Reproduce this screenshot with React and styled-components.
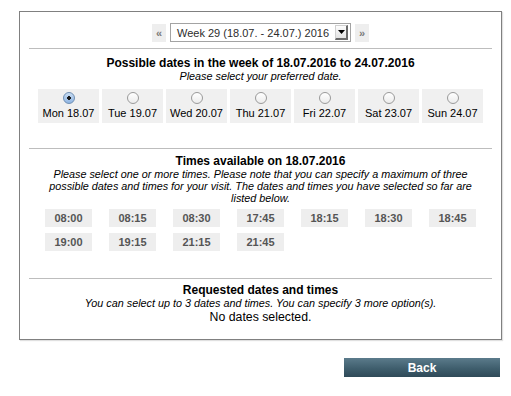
import React from "react";
import styled, { createGlobalStyle } from "styled-components";

const Global = createGlobalStyle`
  html, body { margin: 0; padding: 0; background: #fff; }
  body { font-family: "Liberation Sans", Arial, Helvetica, sans-serif; color: #000; }
`;

const Page = styled.div`
  padding: 11px 0 0 19px;
  width: 483px;
`;

const Panel = styled.div`
  box-sizing: border-box;
  width: 483px;
  border: 1px solid #808080;
  box-shadow: 1px 1px 1px rgba(0, 0, 0, 0.12);
  padding: 0 9px;
`;

const Nav = styled.div`
  display: flex;
  justify-content: center;
  align-items: center;
  gap: 3px;
  padding: 11px 0 6px;
`;

const NavArrow = styled.span`
  display: flex;
  align-items: center;
  justify-content: center;
  width: 14px;
  height: 18px;
  background: #eeeeee;
  color: #7a7a7a;
  font-size: 11px;
  font-weight: bold;
`;

const Select = styled.div`
  box-sizing: border-box;
  display: flex;
  align-items: center;
  justify-content: space-between;
  width: 181px;
  height: 19px;
  border: 1px solid #a3a3a3;
  background: #fff;
  padding: 0 2px 0 6px;
  font-size: 11px;
  white-space: nowrap;
  color: #2c2c2c;
  margin: 0 1px;
`;

const SelectArrow = styled.span`
  box-sizing: border-box;
  display: flex;
  align-items: center;
  justify-content: center;
  width: 13px;
  height: 15px;
  background: linear-gradient(#fdfdfd, #e2e2e2);
  border-right: 2px solid #6a6a6a;
  border-bottom: 2px solid #6a6a6a;
  border-top: 1px solid #d0d0d0;
  border-left: 1px solid #d0d0d0;
`;

const Divider = styled.div`
  border-top: 1px solid #bdbdbd;
`;

const Section = styled.div`
  text-align: center;
  padding-top: ${(p) => p.$top}px;
  padding-bottom: ${(p) => p.$bottom}px;
`;

const Heading = styled.div`
  font-size: 12px;
  font-weight: bold;
  line-height: ${(p) => p.$lh || 14}px;
`;

const Note = styled.div`
  font-size: 10.8px;
  font-style: italic;
  line-height: ${(p) => p.$lh || 13}px;
`;

const Plain = styled.div`
  font-size: 12.3px;
  line-height: 14px;
`;

const Grid = styled.div`
  display: grid;
  grid-template-columns: repeat(7, 61px);
  column-gap: 3px;
  row-gap: 6px;
  justify-content: center;
  justify-items: center;
  margin-top: ${(p) => p.$top}px;
`;

const DayCell = styled.label`
  box-sizing: border-box;
  width: 61px;
  height: 34px;
  background: #f0f0f0;
  display: flex;
  flex-direction: column;
  align-items: center;
  padding-top: 3px;
  font-size: 11px;
  line-height: 14px;
`;

const Radio = styled.span`
  box-sizing: border-box;
  width: 12px;
  height: 12px;
  border-radius: 50%;
  border: 1px solid ${(p) => (p.$checked ? "#6f8fb3" : "#9a9a9a")};
  background: ${(p) =>
    p.$checked
      ? "radial-gradient(circle, #1a1a1a 0 1.6px, transparent 2px), linear-gradient(#c8dcf2, #8fb5e3)"
      : "linear-gradient(#ffffff, #ececec)"};
  margin-bottom: 2px;
`;

const TimeButton = styled.span`
  display: flex;
  align-items: center;
  justify-content: center;
  width: 47px;
  height: 18px;
  background: #eeeeee;
  color: #555;
  font-size: 11px;
  font-weight: bold;
`;

const Footer = styled.div`
  display: flex;
  justify-content: flex-end;
  padding: 18px 2px 0 0;
`;

const BackButton = styled.button`
  width: 156px;
  height: 19px;
  border: none;
  padding: 0;
  font-family: inherit;
  font-size: 12px;
  font-weight: bold;
  color: #fff;
  background: linear-gradient(#5b7b8b, #3f5e6d 55%, #2f4a58);
`;

const days = [
  "Mon 18.07",
  "Tue 19.07",
  "Wed 20.07",
  "Thu 21.07",
  "Fri 22.07",
  "Sat 23.07",
  "Sun 24.07",
];

const times = [
  "08:00",
  "08:15",
  "08:30",
  "17:45",
  "18:15",
  "18:30",
  "18:45",
  "19:00",
  "19:15",
  "21:15",
  "21:45",
];

export default function App() {
  return (
    <>
      <Global />
      <Page>
        <Panel>
          <Nav>
            <NavArrow>«</NavArrow>
            <Select>
              <span>Week 29 (18.07. - 24.07.) 2016</span>
              <SelectArrow>
                <svg width="7" height="4" viewBox="0 0 7 4">
                  <path d="M0 0H7L3.5 4Z" fill="#000" />
                </svg>
              </SelectArrow>
            </Select>
            <NavArrow>»</NavArrow>
          </Nav>
          <Divider />
          <Section $top={7} $bottom={25}>
            <Heading>Possible dates in the week of 18.07.2016 to 24.07.2016</Heading>
            <Note>Please select your preferred date.</Note>
            <Grid $top={6}>
              {days.map((d, i) => (
                <DayCell key={d}>
                  <Radio $checked={i === 0} />
                  {d}
                </DayCell>
              ))}
            </Grid>
          </Section>
          <Divider />
          <Section $top={5} $bottom={27}>
            <Heading>Times available on 18.07.2016</Heading>
            <Note $lh={12}>
              Please select one or more times. Please note that you can specify a maximum of three
              <br />
              possible dates and times for your visit. The dates and times you have selected so far are
              <br />
              listed below.
            </Note>
            <Grid $top={5}>
              {times.map((t) => (
                <TimeButton key={t}>{t}</TimeButton>
              ))}
            </Grid>
          </Section>
          <Divider />
          <Section $top={5} $bottom={15}>
            <Heading $lh={13}>Requested dates and times</Heading>
            <Note>You can select up to 3 dates and times. You can specify 3 more option(s).</Note>
            <Plain>No dates selected.</Plain>
          </Section>
        </Panel>
        <Footer>
          <BackButton>Back</BackButton>
        </Footer>
      </Page>
    </>
  );
}
